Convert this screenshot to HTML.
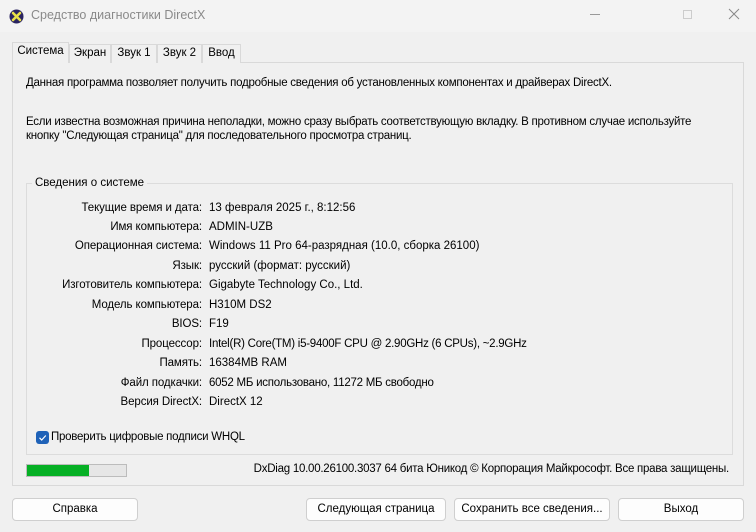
<!DOCTYPE html>
<html><head><meta charset="utf-8"><style>
*{margin:0;padding:0;box-sizing:border-box}
body{width:756px;height:532px;background:#f0f0f0;font-family:"Liberation Sans",sans-serif;font-size:11.5px;color:#000;position:relative;overflow:hidden}
.a{position:absolute;white-space:nowrap}
.title{left:0;top:0;width:756px;height:32px;background:#f3f3f3}
.tab{position:absolute;top:44px;height:19px;border:1px solid #d9d9d9;border-bottom:none;background:#f0f0f0;font-size:11.5px;padding:2px 0 0;text-align:center}
.panel{left:12px;top:62px;width:732px;height:424px;border:1px solid #d9d9d9;background:#f0f0f0}
.grp{left:26px;top:183px;width:707px;height:272px;border:1px solid #dcdcdc}
.lbl{right:554px;text-align:right;letter-spacing:-0.1px}
.val{left:209px}
.btn{position:absolute;top:498px;height:23px;border:1px solid #cfcfcf;border-radius:4px;background:#fdfdfd;text-align:center;line-height:21px}
.t{letter-spacing:-0.25px}
</style></head><body>
<div class="a title"></div>
<svg class="a" style="left:9px;top:9px" width="15" height="15" viewBox="0 0 15 15"><circle cx="7.5" cy="7.5" r="7" fill="#2a2460"/><path d="M4 4L11 11M11 4L4 11" stroke="#e8e04a" stroke-width="2.6" stroke-linecap="round"/></svg>
<div class="a" style="left:31px;top:8px;font-size:12.5px;color:#8a8a8a">Средство диагностики DirectX</div>
<div class="a" style="left:590px;top:14px;width:10px;height:1px;background:#999"></div>
<div class="a" style="left:683px;top:10px;width:9px;height:9px;border:1px solid #ccc"></div>
<svg class="a" style="left:728px;top:8px" width="12" height="12"><path d="M1 1L11 11M11 1L1 11" stroke="#888" stroke-width="1"/></svg>
<div class="a panel"></div>
<div class="tab" style="left:12px;top:42px;height:21px;width:57px;background:#f0f0f0;z-index:2;border-color:#d9d9d9">Система</div>
<div class="tab" style="left:69px;width:42px">Экран</div>
<div class="tab" style="left:111px;width:46px">Звук 1</div>
<div class="tab" style="left:157px;width:45px">Звук 2</div>
<div class="tab" style="left:202px;width:39px">Ввод</div>
<div class="a t" style="left:26px;top:77px">Данная программа позволяет получить подробные сведения об установленных компонентах и драйверах DirectX.</div>
<div class="a t" style="left:26px;top:116px">Если известна возможная причина неполадки, можно сразу выбрать соответствующую вкладку. В противном случае используйте</div>
<div class="a t" style="left:26px;top:130px">кнопку "Следующая страница" для последовательного просмотра страниц.</div>
<div class="a grp"></div>
<div class="a" style="left:32px;top:177px;background:#f0f0f0;padding:0 3px">Сведения о системе</div>
<div class="a lbl" style="top:202px">Текущие время и дата:</div><div class="a val" style="top:202px">13 февраля 2025 г., 8:12:56</div>
<div class="a lbl" style="top:221px">Имя компьютера:</div><div class="a val" style="top:221px">ADMIN-UZB</div>
<div class="a lbl" style="top:240px">Операционная система:</div><div class="a val" style="top:240px">Windows 11 Pro 64-разрядная (10.0, сборка 26100)</div>
<div class="a lbl" style="top:260px">Язык:</div><div class="a val" style="top:260px">русский (формат: русский)</div>
<div class="a lbl" style="top:279px">Изготовитель компьютера:</div><div class="a val" style="top:279px">Gigabyte Technology Co., Ltd.</div>
<div class="a lbl" style="top:299px">Модель компьютера:</div><div class="a val" style="top:299px">H310M DS2</div>
<div class="a lbl" style="top:318px">BIOS:</div><div class="a val" style="top:318px">F19</div>
<div class="a lbl" style="top:338px">Процессор:</div><div class="a val t" style="top:338px">Intel(R) Core(TM) i5-9400F CPU @ 2.90GHz (6 CPUs), ~2.9GHz</div>
<div class="a lbl" style="top:357px">Память:</div><div class="a val" style="top:357px">16384MB RAM</div>
<div class="a lbl" style="top:377px">Файл подкачки:</div><div class="a val t" style="top:377px">6052 МБ использовано, 11272 МБ свободно</div>
<div class="a lbl" style="top:396px">Версия DirectX:</div><div class="a val" style="top:396px">DirectX 12</div>
<div class="a" style="left:36px;top:431px;width:13px;height:13px;border-radius:3px;background:#1f62b8"></div>
<svg class="a" style="left:36px;top:431px" width="13" height="13"><path d="M3.5 6.8L5.7 9L9.8 4.5" stroke="#fff" stroke-width="1.2" fill="none"/></svg>
<div class="a t" style="left:51px;top:431px">Проверить цифровые подписи WHQL</div>
<div class="a" style="left:26px;top:464px;width:101px;height:13px;background:#e6e6e6;border:1px solid #bcbcbc"></div>
<div class="a" style="left:27px;top:465px;width:62px;height:11px;background:#06b025"></div>
<div class="a t" style="right:27px;top:463px">DxDiag 10.00.26100.3037 64 бита Юникод © Корпорация Майкрософт. Все права защищены.</div>
<div class="btn" style="left:12px;width:126px">Справка</div>
<div class="btn" style="left:306px;width:140px">Следующая страница</div>
<div class="btn" style="left:454px;width:156px">Сохранить все сведения...</div>
<div class="btn" style="left:618px;width:126px">Выход</div>
</body></html>
